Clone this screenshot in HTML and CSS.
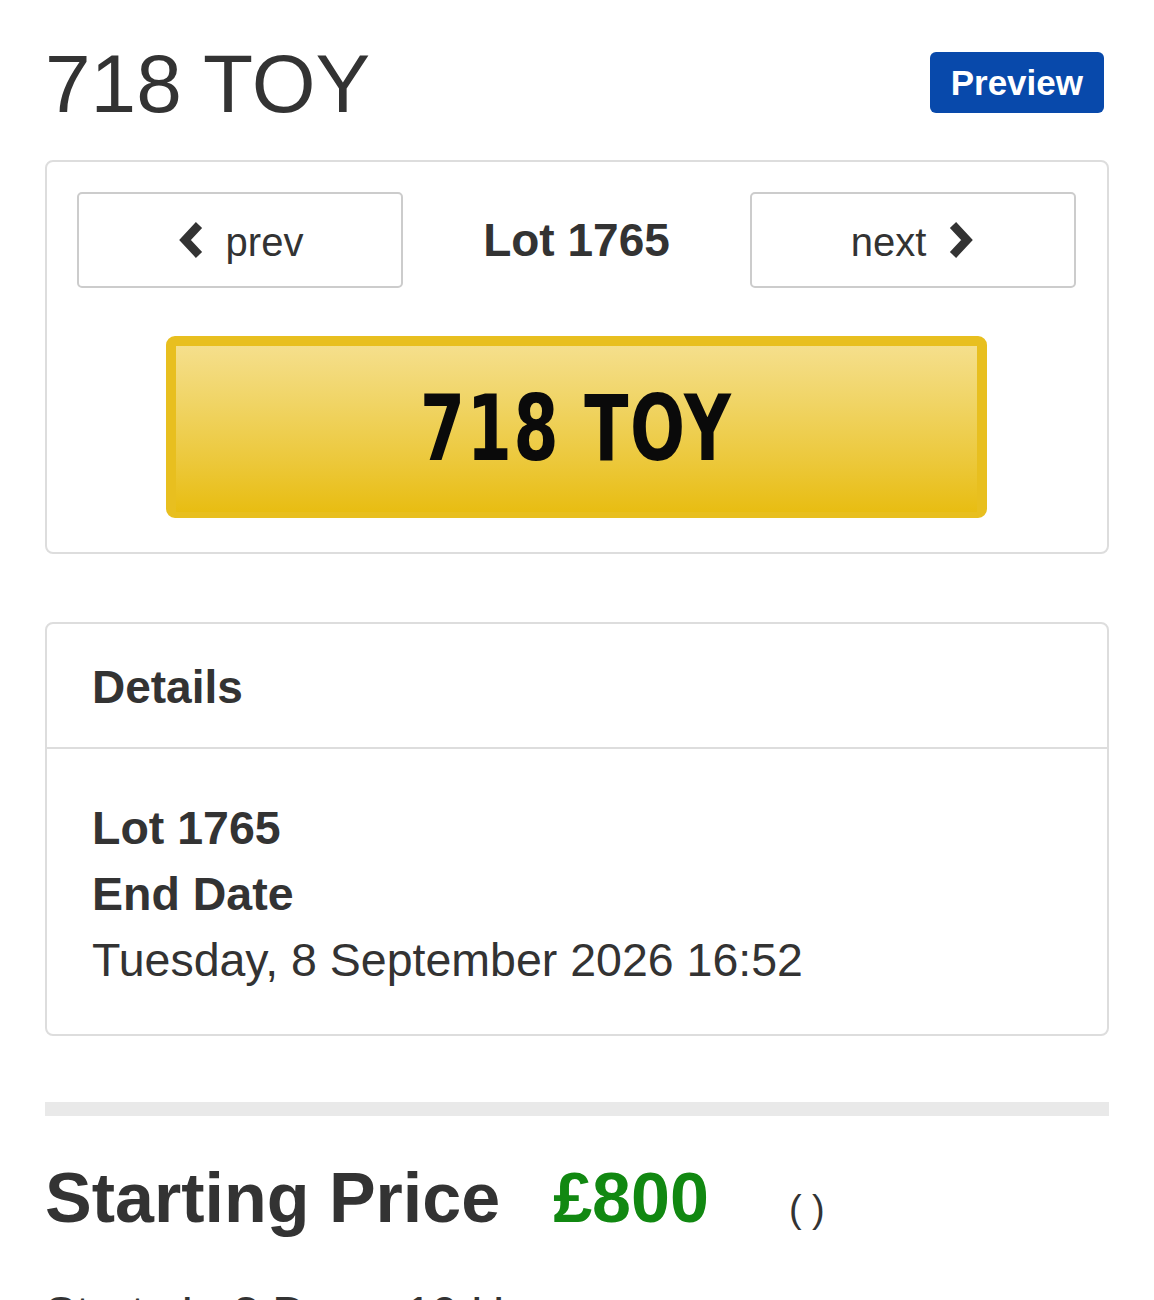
FILE: index.html
```html
<!DOCTYPE html>
<html lang="en">
<head>
    <meta charset="UTF-8">
    <meta name="viewport" content="width=device-width, initial-scale=1.0">
    <title>718 TOY - Lot 1765</title>
    <link rel="stylesheet" href="styles.css">
</head>
<body>
    <div class="page">
        <div class="title-row">
            <h1 class="title">718 TOY</h1>
            <a class="preview-btn" href="#">Preview</a>
        </div>

        <div class="card plate-card">
            <div class="lot-nav">
                <a class="nav-btn" href="#">
                    <svg class="chev" width="28" height="38" viewBox="0 0 28 38"><polyline points="22,4 8,19 22,34" fill="none" stroke="#333" stroke-width="8.5" stroke-linejoin="miter"/></svg>
                    <span>prev</span>
                </a>
                <div class="lot-title">Lot 1765</div>
                <a class="nav-btn" href="#">
                    <span>next</span>
                    <svg class="chev" width="28" height="38" viewBox="0 0 28 38"><polyline points="6,4 20,19 6,34" fill="none" stroke="#333" stroke-width="8.5" stroke-linejoin="miter"/></svg>
                </a>
            </div>
            <div class="plate">
                <span class="plate-text">718 TOY</span>
            </div>
        </div>

        <div class="card details-card">
            <div class="details-head">Details</div>
            <div class="details-body">
                <div class="bold">Lot 1765</div>
                <div class="bold">End Date</div>
                <div>Tuesday, 8 September 2026 16:52</div>
            </div>
        </div>

        <div class="divider-bar"></div>

        <div class="price-row">
            <span class="price-label">Starting Price</span>
            <span class="price">£800</span>
            <span class="price-note">( )</span>
        </div>
        <div class="starts-in">Starts In 8 Days, 10 Hours</div>
    </div>
</body>
</html>
```

FILE: styles.css
```css
* {
    box-sizing: border-box;
    font-family: 'Liberation Sans', Arial, sans-serif;
}

body {
    margin: 0;
    padding: 0;
    background: #ffffff;
    color: #333333;
}

.page {
    padding: 41px 45px 0 45px;
}

.title-row {
    display: flex;
    align-items: center;
    justify-content: space-between;
    padding-right: 5px;
}

.title {
    margin: 0;
    font-size: 82px;
    font-weight: normal;
    line-height: 85px;
    color: #333333;
}

.preview-btn {
    display: block;
    background-color: #0849ab;
    color: white;
    font-size: 35px;
    font-weight: bold;
    text-decoration: none;
    padding: 0 21px;
    height: 61px;
    line-height: 61px;
    border-radius: 6px;
    position: relative;
    top: -1px;
}

.card {
    border: 2px solid #dddddd;
    border-radius: 8px;
    background: #ffffff;
}

.plate-card {
    margin-top: 34px;
    padding: 30px 31px 34px 30px;
}

.lot-nav {
    display: flex;
    align-items: center;
    justify-content: space-between;
}

.nav-btn {
    display: flex;
    align-items: center;
    justify-content: center;
    gap: 21px;
    width: 326px;
    height: 96px;
    border: 2px solid #cccccc;
    border-radius: 5px;
    color: #333333;
    text-decoration: none;
    font-size: 40px;
}

.nav-btn span {
    position: relative;
    top: 2px;
}

.lot-title {
    font-size: 46px;
    font-weight: bold;
}

.plate {
    width: 821px;
    height: 182px;
    margin: 48px auto 0 auto;
    border: 10px solid #e8bf1f;
    border-bottom-width: 6px;
    border-radius: 9px;
    background: linear-gradient(to bottom, #f5df8c 0%, #f0d464 35%, #ecc83a 70%, #e8bd12 100%);
    display: flex;
    align-items: center;
    justify-content: center;
}

.plate-text {
    display: inline-block;
    font-family: 'DejaVu Sans Condensed', 'DejaVu Sans', sans-serif;
    font-stretch: condensed;
    font-weight: bold;
    font-size: 90px;
    color: #0a0a0a;
    transform: scaleX(0.8);
    letter-spacing: 2px;
    position: relative;
    top: -1px;
}

.details-card {
    margin-top: 68px;
}

.details-head {
    padding: 30px 45px 27px 45px;
    font-size: 46px;
    line-height: 66px;
    font-weight: bold;
    border-bottom: 2px solid #dddddd;
}

.details-body {
    padding: 46px 45px 41px 45px;
    font-size: 46.5px;
    line-height: 66px;
}

.bold {
    font-weight: bold;
}

.divider-bar {
    margin-top: 66px;
    height: 14px;
    background-color: #e9e9e9;
}

.price-row {
    margin-top: 39px;
    display: flex;
    align-items: baseline;
    line-height: 86px;
}

.price-label {
    font-size: 70px;
    font-weight: bold;
}

.price {
    font-size: 70px;
    font-weight: bold;
    color: #118811;
    margin-left: 53px;
}

.price-note {
    font-size: 38px;
    margin-left: 80px;
}

.starts-in {
    margin-top: 34px;
    font-size: 47px;
    line-height: 54px;
}
```
